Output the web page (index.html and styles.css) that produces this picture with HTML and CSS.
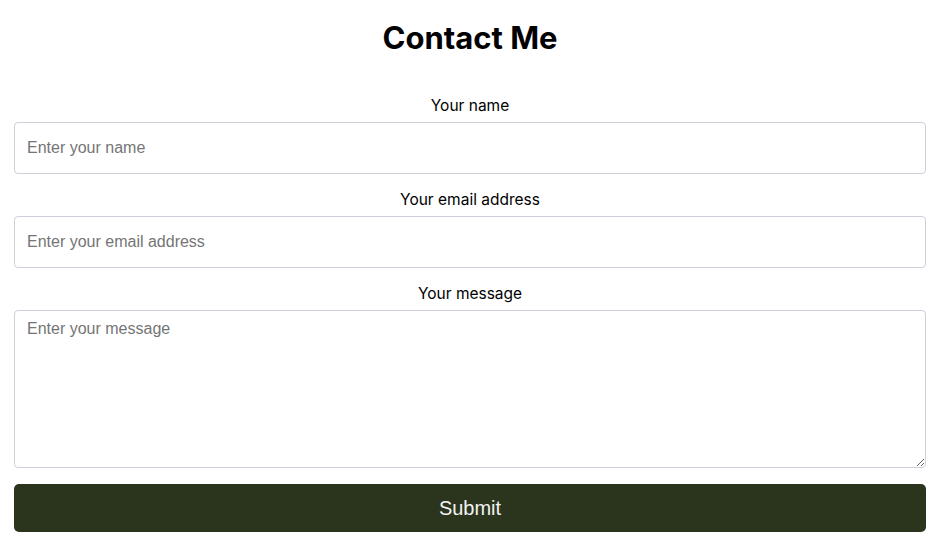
FILE: index.html
```html
<!DOCTYPE html>
<html lang="en">
<head>
<meta charset="utf-8">
<title>Contact Me</title>
<link rel="stylesheet" href="styles.css">
</head>
<body>
<main class="page">
  <h1 class="title">Contact Me</h1>
  <form class="form">
    <label class="label" for="name">Your name</label>
    <input class="field" id="name" type="text" placeholder="Enter your name">
    <label class="label" for="email">Your email address</label>
    <input class="field" id="email" type="email" placeholder="Enter your email address">
    <label class="label" for="message">Your message</label>
    <textarea class="field area" id="message" placeholder="Enter your message"></textarea>
    <button class="submit" type="button">Submit</button>
  </form>
</main>
</body>
</html>
```

FILE: styles.css
```css
* { box-sizing: border-box; }
html, body { margin: 0; padding: 0; background: #fff; }
body { font-family: Inter, "Liberation Sans", sans-serif; color: #000; }
.page { padding: 0 17px 0 14px; }
.title {
  margin: 19px 0 38px;
  font-size: 31px;
  line-height: 38px;
  font-weight: 700;
  text-align: center;
}
.form { display: flex; flex-direction: column; }
.label {
  display: block;
  text-align: center;
  font-size: 15.5px;
  line-height: 20px;
  margin: 16px 0 6px;
}
.label:first-child { margin-top: 1px; }
.field {
  width: 100%;
  height: 52px;
  border: 1px solid #ccd0d8;
  border-radius: 4px;
  padding: 0 12px;
  font-family: "Liberation Sans", Arial, sans-serif;
  font-size: 16px;
  color: #000;
  background: #fff;
}
.field::placeholder { color: #757575; }
.area {
  height: 158px;
  padding: 9px 12px;
  resize: vertical;
  display: block;
}
.submit {
  margin-top: 16px;
  height: 48px;
  width: 100%;
  border: none;
  border-radius: 5px;
  background: #2b351e;
  color: #f2f2f2;
  font-family: "Liberation Sans", Arial, sans-serif;
  font-size: 20px;
}
```
